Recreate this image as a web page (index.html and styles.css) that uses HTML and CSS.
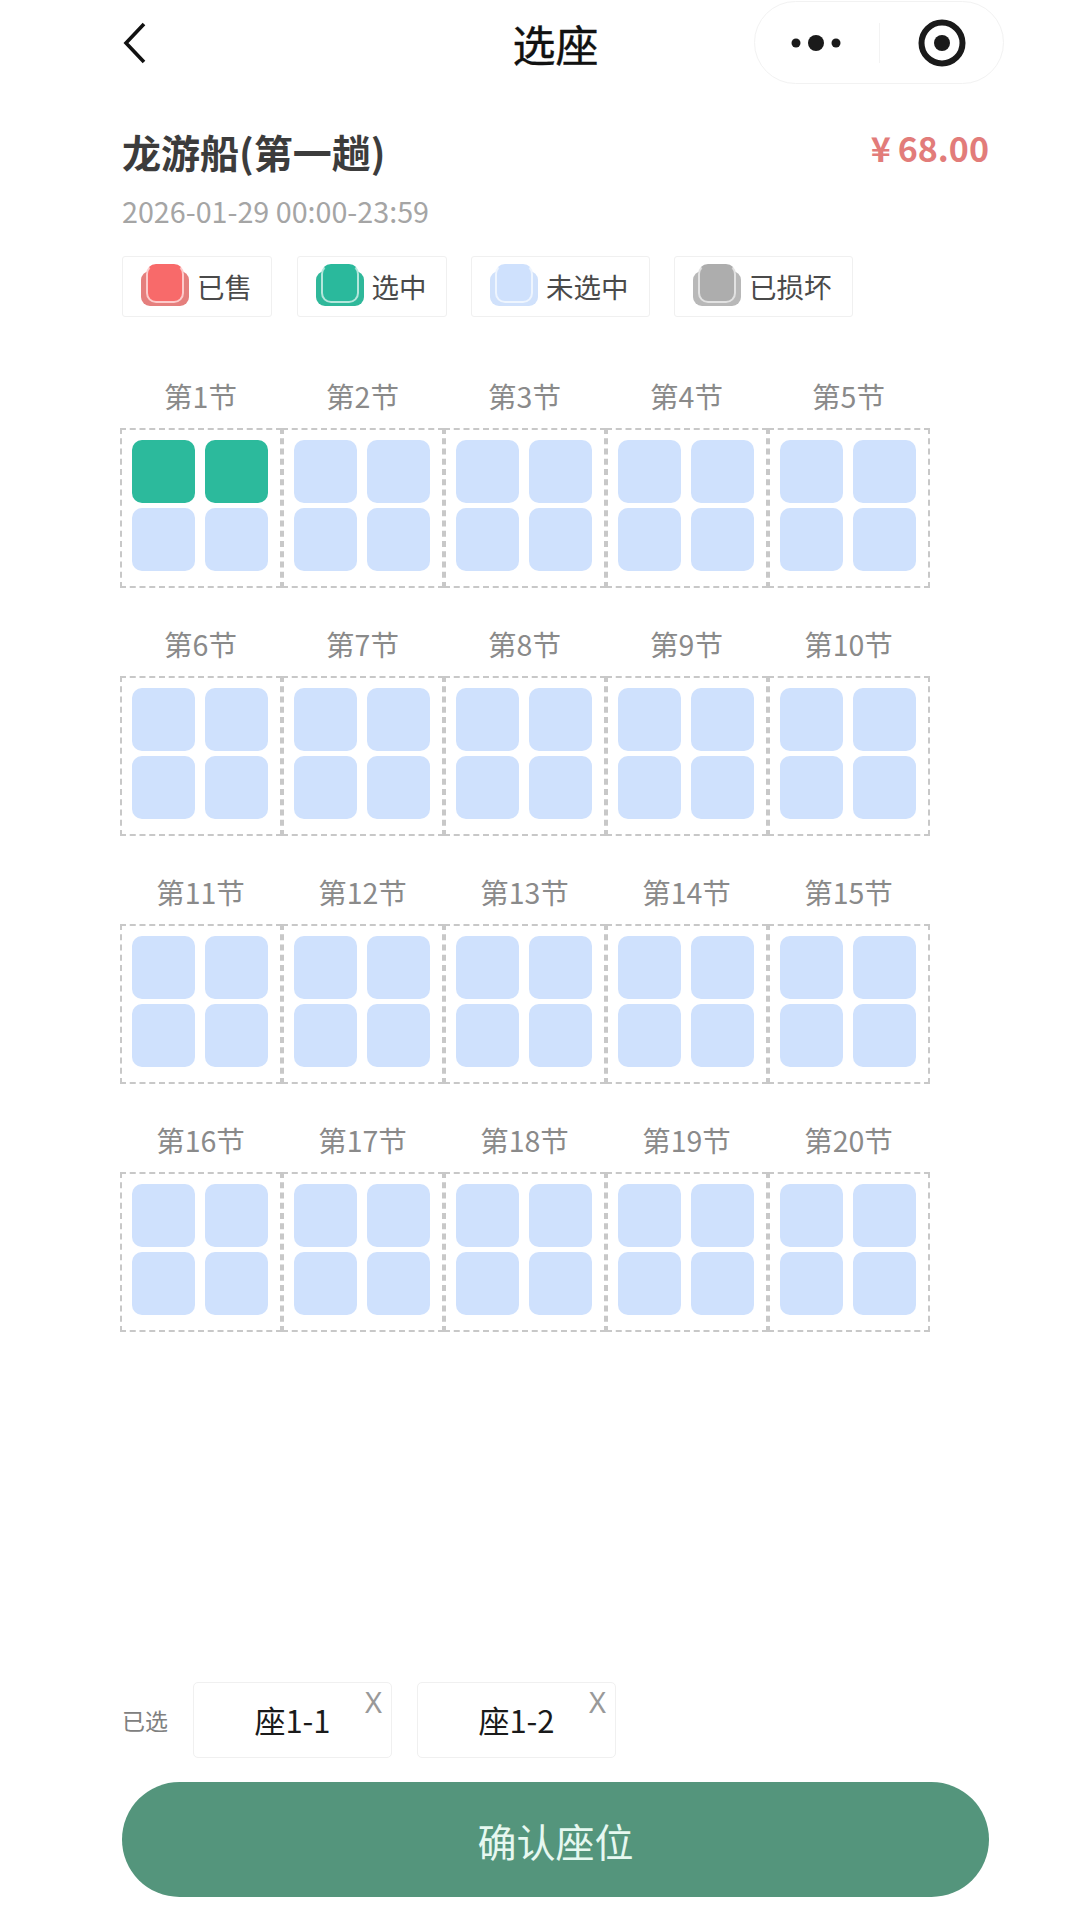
FILE: index.html
```html
<!DOCTYPE html>
<html lang="zh">
<head>
<meta charset="utf-8">
<title>选座</title>
<link rel="stylesheet" href="styles.css">
</head>
<body>
<div class="page">
  <header class="nav">
    <svg class="back" width="24" height="44" viewBox="0 0 24 44"><path d="M21 3 3 22l18 19" fill="none" stroke="#111" stroke-width="3.6"/></svg>
    <h1 class="nav-title">选座</h1>
    <div class="capsule">
      <div class="capsule-part">
        <svg width="62" height="20" viewBox="0 0 62 20"><circle cx="10" cy="10" r="4.5" fill="#1a1a1a"/><circle cx="30" cy="10" r="8" fill="#1a1a1a"/><circle cx="50" cy="10" r="4.5" fill="#1a1a1a"/></svg>
      </div>
      <div class="capsule-line"></div>
      <div class="capsule-part">
        <svg width="48" height="48" viewBox="0 0 48 48"><circle cx="24" cy="24" r="20.5" fill="none" stroke="#1a1a1a" stroke-width="6"/><circle cx="24" cy="24" r="8" fill="#1a1a1a"/></svg>
      </div>
    </div>
  </header>

  <section class="info">
    <div class="info-top">
      <h2 class="boat">龙游船(第一趟)</h2>
      <div class="price"><span class="yen">¥</span>68.00</div>
    </div>
    <div class="time">2026-01-29 00:00-23:59</div>
    <div class="legend">
      <div class="legend-item w-2"><span class="mark mark-sold"><i></i></span>已售</div>
      <div class="legend-item w-2"><span class="mark mark-on"><i></i></span>选中</div>
      <div class="legend-item w-3"><span class="mark mark-free"><i></i></span>未选中</div>
      <div class="legend-item w-3"><span class="mark mark-bad"><i></i></span>已损坏</div>
    </div>
  </section>

  <main class="grid">
    <div class="car"><div class="car-name">第1节</div><div class="seats"><span class="seat on"></span><span class="seat on"></span><span class="seat"></span><span class="seat"></span></div></div>
    <div class="car"><div class="car-name">第2节</div><div class="seats"><span class="seat"></span><span class="seat"></span><span class="seat"></span><span class="seat"></span></div></div>
    <div class="car"><div class="car-name">第3节</div><div class="seats"><span class="seat"></span><span class="seat"></span><span class="seat"></span><span class="seat"></span></div></div>
    <div class="car"><div class="car-name">第4节</div><div class="seats"><span class="seat"></span><span class="seat"></span><span class="seat"></span><span class="seat"></span></div></div>
    <div class="car"><div class="car-name">第5节</div><div class="seats"><span class="seat"></span><span class="seat"></span><span class="seat"></span><span class="seat"></span></div></div>
    <div class="car"><div class="car-name">第6节</div><div class="seats"><span class="seat"></span><span class="seat"></span><span class="seat"></span><span class="seat"></span></div></div>
    <div class="car"><div class="car-name">第7节</div><div class="seats"><span class="seat"></span><span class="seat"></span><span class="seat"></span><span class="seat"></span></div></div>
    <div class="car"><div class="car-name">第8节</div><div class="seats"><span class="seat"></span><span class="seat"></span><span class="seat"></span><span class="seat"></span></div></div>
    <div class="car"><div class="car-name">第9节</div><div class="seats"><span class="seat"></span><span class="seat"></span><span class="seat"></span><span class="seat"></span></div></div>
    <div class="car"><div class="car-name">第10节</div><div class="seats"><span class="seat"></span><span class="seat"></span><span class="seat"></span><span class="seat"></span></div></div>
    <div class="car"><div class="car-name">第11节</div><div class="seats"><span class="seat"></span><span class="seat"></span><span class="seat"></span><span class="seat"></span></div></div>
    <div class="car"><div class="car-name">第12节</div><div class="seats"><span class="seat"></span><span class="seat"></span><span class="seat"></span><span class="seat"></span></div></div>
    <div class="car"><div class="car-name">第13节</div><div class="seats"><span class="seat"></span><span class="seat"></span><span class="seat"></span><span class="seat"></span></div></div>
    <div class="car"><div class="car-name">第14节</div><div class="seats"><span class="seat"></span><span class="seat"></span><span class="seat"></span><span class="seat"></span></div></div>
    <div class="car"><div class="car-name">第15节</div><div class="seats"><span class="seat"></span><span class="seat"></span><span class="seat"></span><span class="seat"></span></div></div>
    <div class="car"><div class="car-name">第16节</div><div class="seats"><span class="seat"></span><span class="seat"></span><span class="seat"></span><span class="seat"></span></div></div>
    <div class="car"><div class="car-name">第17节</div><div class="seats"><span class="seat"></span><span class="seat"></span><span class="seat"></span><span class="seat"></span></div></div>
    <div class="car"><div class="car-name">第18节</div><div class="seats"><span class="seat"></span><span class="seat"></span><span class="seat"></span><span class="seat"></span></div></div>
    <div class="car"><div class="car-name">第19节</div><div class="seats"><span class="seat"></span><span class="seat"></span><span class="seat"></span><span class="seat"></span></div></div>
    <div class="car"><div class="car-name">第20节</div><div class="seats"><span class="seat"></span><span class="seat"></span><span class="seat"></span><span class="seat"></span></div></div>
  </main>

  <footer class="footer">
    <div class="picked">
      <span class="picked-label">已选</span>
      <div class="chip">座1-1<span class="chip-x">X</span></div>
      <div class="chip">座1-2<span class="chip-x">X</span></div>
    </div>
    <button class="confirm">确认座位</button>
  </footer>
</div>
</body>
</html>
```
FILE: styles.css
```css
* { box-sizing: border-box; }
html, body { margin: 0; padding: 0; background: #fff; }
body { font-family: "Noto Sans CJK SC", "Noto Sans", sans-serif; }

.page {
  width: 1080px;
  height: 1920px;
  display: flex;
  flex-direction: column;
  overflow: hidden;
}

/* nav */
.nav {
  position: relative;
  height: 86px;
  flex: none;
  display: flex;
  align-items: center;
  justify-content: center;
}
.back { position: absolute; left: 123px; top: 21px; }
.nav-title {
  margin: 0 0 0 31px;
  font-size: 43px;
  font-weight: 400;
  line-height: 84px;
  color: #111;
  -webkit-text-stroke: 0.4px #111;
}
.capsule {
  position: absolute;
  left: 754px;
  top: 1px;
  width: 250px;
  height: 83px;
  border: 1px solid #f2f2f2;
  border-radius: 42px;
  display: flex;
  align-items: center;
}
.capsule-part { flex: 1; display: flex; justify-content: center; align-items: center; padding-left: 1px; }
.capsule-part:first-child { flex: none; width: 124px; padding-left: 0; }
.capsule-line { width: 1px; height: 40px; background: #f3f3f3; }

/* info */
.info { padding: 39.5px 91px 0 122px; flex: none; }
.info-top { display: flex; justify-content: space-between; align-items: flex-start; height: 50px; }
.boat {
  margin: 0;
  font-size: 39px;
  line-height: 50px;
  font-weight: 700;
  color: #3c3c3c;
}
.price {
  display: flex;
  align-items: baseline;
  font-size: 34px;
  line-height: 44px;
  font-weight: 700;
  color: #e27c7a;
}
.yen { margin-right: 7px; }
.time {
  margin-top: 13px;
  font-size: 28.7px;
  line-height: 44px;
  color: #a5a5a5;
}
.legend { display: flex; margin-top: 23px; gap: 24.5px; }
.legend-item {
  height: 61px;
  display: flex;
  align-items: center;
  gap: 8px;
  padding-left: 18px;
  border: 1px solid #f0f0f0;
  border-radius: 3px;
  font-size: 27.5px;
  color: #4a4a4a;
}
.w-2 { width: 150px; }
.w-3 { width: 178.5px; }
.mark {
  position: relative;
  display: block;
  width: 48px;
  height: 35px;
  margin-top: 4px;
  border-radius: 9px;
}
.mark i {
  position: absolute;
  left: 5px;
  top: -7px;
  width: 38px;
  height: 39px;
  border-radius: 10px;
  border: 2px solid rgba(255, 255, 255, 0.65);
  border-top-color: transparent;
}
.mark-sold { background: #e57f7d; }
.mark-sold i { background: #f86a6a; }
.mark-on { background: #2fb89a; }
.mark-on i { background: #2ab99c; }
.mark-free { background: #d0e1fb; }
.mark-free i { background: #cfe1fd; }
.mark-bad { background: #b8b8b8; }
.mark-bad i { background: #adadad; }

/* seat grid */
.grid {
  margin: 59px 0 0 120px;
  width: 810px;
  flex: none;
  display: grid;
  grid-template-columns: repeat(5, 162px);
  row-gap: 36.2px;
}
.car-name {
  height: 40px;
  margin-bottom: 12px;
  padding-right: 1px;
  font-size: 28.5px;
  line-height: 40px;
  text-align: center;
  color: #8a8a8a;
}
.seats {
  height: 160px;
  padding: 10px 0 0 10px;
  border: 2px dashed #c8c8c8;
  display: grid;
  grid-template-columns: 63px 63px;
  grid-auto-rows: 63px;
  column-gap: 10px;
  row-gap: 5px;
}
.seat { background: #cfe1fd; border-radius: 10px; }
.seat.on { background: #2cba9c; }

/* footer */
.footer { margin-top: auto; flex: none; padding: 0 91px 23px 122px; }
.picked { display: flex; align-items: center; height: 75px; }
.picked-label { width: 71px; font-size: 23px; color: #808080; }
.chip {
  position: relative;
  width: 199px;
  height: 76px;
  margin-right: 25px;
  border: 1px solid #f0f0f0;
  border-radius: 5px;
  display: flex;
  align-items: center;
  justify-content: center;
  font-size: 31px;
  color: #1a1a1a;
}
.chip-x {
  position: absolute;
  right: 9px;
  top: 0;
  font-family: "Noto Sans", sans-serif;
  font-size: 29px;
  line-height: 38px;
  color: #999;
}
.confirm {
  display: block;
  width: 867px;
  height: 115px;
  margin-top: 25px;
  padding: 0;
  border: 0;
  border-radius: 58px;
  background: #54957c;
  color: #e6f8f0;
  font-family: inherit;
  font-size: 39px;
}
```
